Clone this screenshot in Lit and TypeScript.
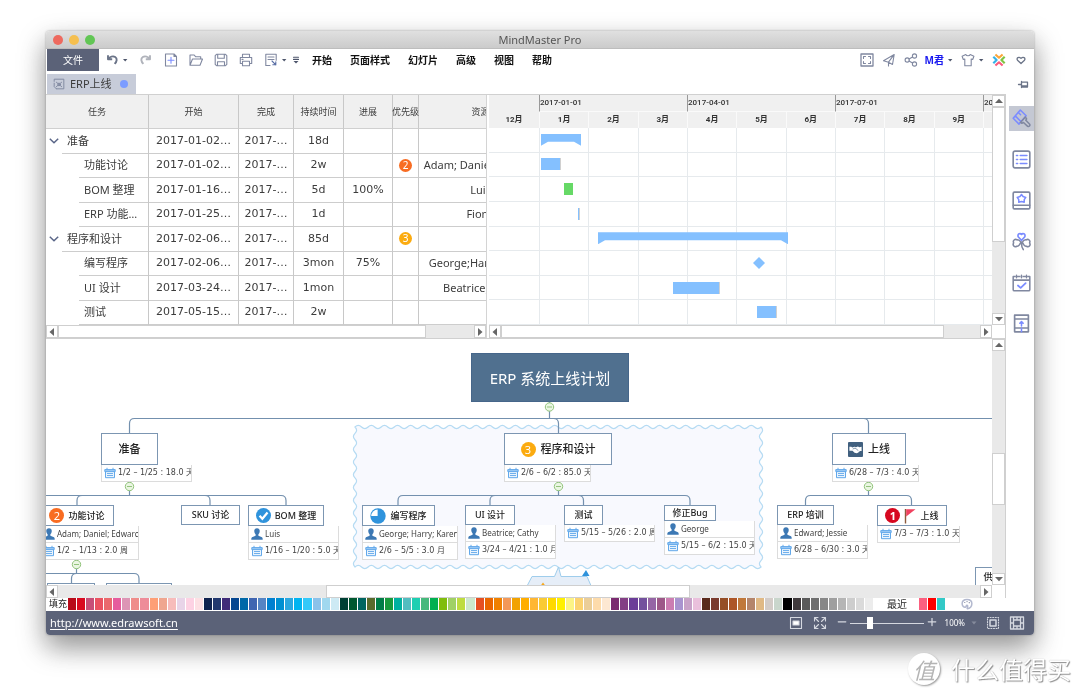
import { LitElement, html, css, svg, nothing } from "lit";
import { customElement } from "lit/decorators.js";
import { classMap } from "lit/directives/class-map.js";
import { styleMap } from "lit/directives/style-map.js";

interface Task {
  name: string;
  level: number;
  start: string;
  end: string;
  span: string;
  progress: string;
  priority: number;
  people: string;
  bar: { kind: "summary" | "work" | "done" | "milestone"; from: number; width: number };
}

const TASKS: Task[] = [
  { name: "准备", level: 0, start: "2017-01-02…", end: "2017-…", span: "18d", progress: "", priority: 0, people: "", bar: { kind: "summary", from: 52, width: 40 } },
  { name: "功能讨论", level: 1, start: "2017-01-02…", end: "2017-…", span: "2w", progress: "", priority: 2, people: "Adam; Daniel; Edward", bar: { kind: "work", from: 52, width: 20 } },
  { name: "BOM 整理", level: 1, start: "2017-01-16…", end: "2017-…", span: "5d", progress: "100%", priority: 0, people: "Luis", bar: { kind: "done", from: 75, width: 9 } },
  { name: "ERP 功能…", level: 1, start: "2017-01-25…", end: "2017-…", span: "1d", progress: "", priority: 0, people: "Fiona", bar: { kind: "work", from: 89, width: 2 } },
  { name: "程序和设计", level: 0, start: "2017-02-06…", end: "2017-…", span: "85d", progress: "", priority: 3, people: "", bar: { kind: "summary", from: 109, width: 190 } },
  { name: "编写程序", level: 1, start: "2017-02-06…", end: "2017-…", span: "3mon", progress: "75%", priority: 0, people: "George;Harry;Karen", bar: { kind: "milestone", from: 264, width: 12 } },
  { name: "UI 设计", level: 1, start: "2017-03-24…", end: "2017-…", span: "1mon", progress: "", priority: 0, people: "Beatrice;Cathy", bar: { kind: "work", from: 184, width: 47 } },
  { name: "测试", level: 1, start: "2017-05-15…", end: "2017-…", span: "2w", progress: "", priority: 0, people: "", bar: { kind: "work", from: 268, width: 20 } },
];

const QUARTERS = [
  { date: "2017-01-01", months: ["1月", "2月", "3月"] },
  { date: "2017-04-01", months: ["4月", "5月", "6月"] },
  { date: "2017-07-01", months: ["7月", "8月", "9月"] },
  { date: "2017-10-01", months: ["10月", "11月", "12月"] },
];

const FILLS =
  "b80a19 d90a20 c74f78 ea5261 ea696d e65c9d dd95b5 ef8c8a ee8c99 fe9f76 efa68f f7bcbb e8d4e8 fdd2e3 fde0e4 10234f 22386e 402c79 054690 0068a8 4065b1 5684c4 0080d0 0090d2 2ba8e0 00b4f1 33c9f9 8bc2ea a0d8ef cdeaf4 004034 00582f 006560 5a6b2c 007d47 189a3c 00b1a0 52bdc0 1dcfb2 45b97c 00b050 80bd0c a0d165 bedc40 cde8cd e64f22 ea6500 f08000 f39858 f2a200 ffad00 ffb733 facb34 ffd800 fff000 fcf385 fcd370 ebce98 fddbab fde8d2 7a2a70 833f85 6b3d98 73519d 9565a5 9d5888 cc7db2 a993cf c8a2c8 eac0dc 5a2a1c 7a3b2e 954e26 ad5627 c0783a b4856b e0b985 d3ccc8 c9d6cc 000000 403a3c 5a5a5a 6e6e6e 878787 9f9f9f b5b5b5 cdcdcd dadada ececec".split(" ");
const RECENT = ["fb6080", "ff0000", "33c9c7"];

interface MapNode {
  x: number;
  y: number;
  w: number;
  h: number;
  text: string;
  kind?: "root" | "branch";
  icons?: string[];
  who?: string;
  when?: string;
  noteWidth?: number;
}

/* Canvas coordinates of the top-left corner of the visible map area. */
const VIEW = { x: 46, y: 339, w: 947, h: 247 };

const NODES: MapNode[] = [
  { x: 471, y: 353, w: 158, h: 49, text: "ERP 系统上线计划", kind: "root" },
  { x: 101, y: 433, w: 57, h: 32, text: "准备", kind: "branch", when: "1/2 – 1/25 : 18.0 天", noteWidth: 91 },
  { x: 504, y: 433, w: 108, h: 32, text: "程序和设计", kind: "branch", icons: ["p3"], when: "2/6 – 6/2 : 85.0 天", noteWidth: 87 },
  { x: 832, y: 433, w: 74, h: 32, text: "上线", kind: "branch", icons: ["deal"], when: "6/28 – 7/3 : 4.0 天", noteWidth: 87 },
  { x: 40, y: 505, w: 74, h: 21, text: "功能讨论", icons: ["p2"], who: "Adam; Daniel; Edward", when: "1/2 – 1/13 : 2.0 周", noteWidth: 99 },
  { x: 181, y: 505, w: 59, h: 20, text: "SKU 讨论" },
  { x: 248, y: 505, w: 76, h: 21, text: "BOM 整理", icons: ["check"], who: "Luis", when: "1/16 – 1/20 : 5.0 天", noteWidth: 91 },
  { x: 362, y: 505, w: 73, h: 21, text: "编写程序", icons: ["pie"], who: "George; Harry; Karen", when: "2/6 – 5/5 : 3.0 月", noteWidth: 96 },
  { x: 465, y: 505, w: 50, h: 20, text: "UI 设计", who: "Beatrice; Cathy", when: "3/24 – 4/21 : 1.0 月", noteWidth: 91 },
  { x: 564, y: 505, w: 39, h: 20, text: "测试", when: "5/15 – 5/26 : 2.0 周", noteWidth: 91 },
  { x: 664, y: 505, w: 52, h: 16, text: "修正Bug", who: "George", when: "5/15 – 6/2 : 15.0 天", noteWidth: 91 },
  { x: 777, y: 505, w: 57, h: 20, text: "ERP 培训", who: "Edward; Jessie", when: "6/28 – 6/30 : 3.0 天", noteWidth: 91 },
  { x: 877, y: 505, w: 70, h: 21, text: "上线", icons: ["p1", "flag"], when: "7/3 – 7/3 : 1.0 天", noteWidth: 83 },
  { x: 47, y: 583, w: 48, h: 20, text: "" },
  { x: 106, y: 583, w: 66, h: 20, text: "" },
  { x: 975, y: 567, w: 44, h: 20, text: "供应商" },
];

const COLLAPSERS = [
  [549.5, 407],
  [129.5, 486.5],
  [558.5, 486.5],
  [868.5, 486.5],
  [76.5, 564.5],
];

const wave = (x0: number, y0: number, x1: number, y1: number) => {
  const side = (dx: number, dy: number, length: number) => {
    const n = Math.round(length / 13.3);
    const s = length / n;
    let d = "";
    for (let i = 0; i < n; i++) {
      d += `q${(dx * s) / 4 + dy * 3.2} ${(dy * s) / 4 - dx * 3.2} ${(dx * s) / 2} ${(dy * s) / 2}`;
      d += `q${(dx * s) / 4 - dy * 3.2} ${(dy * s) / 4 + dx * 3.2} ${(dx * s) / 2} ${(dy * s) / 2}`;
    }
    return d;
  };
  return `M${x0} ${y0}${side(1, 0, x1 - x0)}${side(0, 1, y1 - y0)}${side(-1, 0, x1 - x0)}${side(0, -1, y1 - y0)}Z`;
};

const G = "#8088a0";
const B = "#7b8cff";
const icon = (body: unknown, size = 16, stroke = G) => html`<svg
  class="ico" width=${size} height=${size} viewBox="0 0 16 16" fill="none" stroke=${stroke}
  stroke-width="1.1" stroke-linecap="round" stroke-linejoin="round" aria-hidden="true">${body}</svg>`;

const caret = html`<svg class="ico" width="8" height="6" viewBox="0 0 8 6" aria-hidden="true"><path d="M2 2h4.4L4.2 4.6z" fill="#4d556b" /></svg>`;

const ICONS = {
  undo: svg`<path d="M4 3.2v4h4.2M4.3 7C6 4.6 9 3.6 11.2 5c2.3 1.5 1.8 4.8-.6 6.9" stroke="#6b7488" stroke-width="1.9" stroke-linecap="butt"/>`,
  redo: svg`<path d="M12 3.2v4H7.8M11.7 7C10 4.6 7 3.6 4.8 5 2.5 6.5 3 9.8 5.4 11.9" stroke="#b0b3bb" stroke-width="1.9" stroke-linecap="butt"/>`,
  add: svg`<path d="M2.500 2h8.500l2.500 2.500V14h-11zM11 2v2.500h2.500"/><path d="M8 5.200v6M5 8.200h6" stroke="${B}"/>`,
  open: svg`<path d="M2 13.200V3h4.200l1.500 1.800h5v2.200M2 13.200 4.500 7h10l-2.500 6.200z"/>`,
  save: svg`<path d="M3.500 2.300h9l1.300 1.300v8.800l-1.300 1.300h-9l-1.300-1.300V3.600zM4.700 2.300v3.900h6.600V2.300M4.500 13.700V9.700h7v4"/>`,
  print: svg`<path d="M4.500 5.500V2.300h7v3.200M4.500 11.500H2.300v-6h11.400v6h-2.200M4.500 9.200h7v4.500h-7zM4 7.400h1"/>`,
  send: svg`<path d="M7 13.500H2.800V2.300h10.400v6"/><path d="M5 5h6M5 7.500h6"/><path d="m9 9 3.800 3.800M12.800 9.800v3h-3" stroke="#5a6fa5"/>`,
  more: svg`<path d="M5.500 5.200h5M5.500 7.400h5" stroke="#4d556b"/><path d="M5.500 9h5L8 11.500z" fill="#4d556b" stroke="none"/>`,
  fit: svg`<path d="M2 2h12v12H2z" stroke-width="1.300"/><path d="M4.500 6.500v-2h2M9.500 4.500h2v2M11.500 9.500v2h-2M6.500 11.500h-2v-2"/>`,
  plane: svg`<path d="M2.500 8.800 13.200 2.500l-1.700 10-4-2.300zM7.500 10.200l5.200-7M7.500 10.300V14"/>`,
  share: svg`<circle cx="4.200" cy="8" r="2.100"/><circle cx="11.500" cy="4" r="2.100"/><circle cx="11.500" cy="12" r="2.100"/><path d="m6 7 3.600-2M6 9l3.600 2"/>`,
  shirt: svg`<path d="M5.800 2.500c.6 1.700 3.800 1.700 4.400 0l3.700 1.800-1.200 3.200-1.500-.5v6.700H4.800V7l-1.500.5-1.200-3.200z"/>`,
  heart: svg`<path d="M8 11.500 4.500 8.300C3.200 6 5.800 4.200 8 6.400 10.200 4.200 12.800 6 11.500 8.300z" stroke="#6b7488" stroke-width="1.300"/>`,
  pin: svg`<path d="M3.500 8.500H6M6.500 5.500v6M6.500 6.200h6V11h-6M6.500 10h6" stroke="#6b7488" stroke-width="1.300"/>`,
};

const SIDE = [
  { label: "样式", body: svg`<path d="M7 .9 1 7.800l4.900 4.900 6-7zM3 6l4.600 4.800M5.200 2.800l2 2" stroke="${B}" stroke-width="1.300"/><path d="m11.300 6.800 1 1.500-.7 1.200 3.300 3.400c.6 1.100-.5 2.200-1.700 1.700L9.700 11.400l-1.400.6-1.200-.7z" stroke-width="1.300"/>` },
  { label: "大纲", body: svg`<rect x="1" y="1" width="14" height="14" rx="1.500" stroke-width="1.400"/><path d="M7 4.600h5.500M7 8h5.500M7 11.400h5.500M3.800 4.600h.9M3.800 8h.9M3.800 11.400h.9" stroke="${B}" stroke-width="1.400"/>` },
  { label: "图标", body: svg`<rect x="1" y="1" width="14" height="14" rx="1" stroke-width="1.400"/><path d="M1 12h14" stroke-width="1.200"/><path d="m8 2.900 1.300 1.700 2.300.8-1.300 1.900v2.200L8 8.800l-2.300.7V7.300L4.400 5.400l2.300-.8z" stroke="${B}" stroke-width="1.300"/>` },
  { label: "剪贴画", body: svg`<path d="M8 7 5.200 4C4.400 1.600 7 .5 8 2.100 9 .5 11.600 1.600 10.800 4z" stroke="${B}" stroke-width="1.400"/><path d="M7.500 8.500C6 6.500 4.800 6.500 4.300 6.700 2.500 5.400.4 7.300 1.400 9.200.2 11 2 13.200 4 12c1.800.5 2.500-1.400 3.500-3.500zM8.700 8.500c1.500-2 2.700-2 3.200-1.800 1.800-1.300 3.900.6 2.900 2.500 1.200 1.800-.6 4-2.600 2.800-1.800.5-2.500-1.400-3.500-3.500zM8.100 8.500c-.3 3 .3 4.800 1.400 6.300" stroke-width="1.300"/>` },
  { label: "任务", body: svg`<path d="M1 3.500V14c0 .6.400 1 1 1h12c.6 0 1-.4 1-1V3.500M1 6h14M1 3h1.500M5 3h1.500M9.500 3H11M13.500 3H15M3.800 2v2M8 2v2M12.200 2v2" stroke-width="1.300"/><path d="m5 10.500 2.300 2L11.500 8.500" stroke="${B}" stroke-width="1.500"/>` },
  { label: "幻灯片", body: svg`<path d="M2.200 1h11.600v14H2.200zM2.200 4.200h11.600M2.200 11.800h11.600" stroke-width="1.400"/><path d="M8 10V6.600M6.600 7.800 8 6.400l1.400 1.400M8 12v3" stroke="${B}" stroke-width="1.300"/>` },
];

const badge = (n: number) => html`<span class=${classMap({ badge: true, one: n === 1, two: n === 2, three: n === 3 })}>${n}</span>`;

const nodeIcon = (name: string) => {
  switch (name) {
    case "p1": return badge(1);
    case "p2": return badge(2);
    case "p3": return badge(3);
    case "check":
      return html`<svg width="15" height="15" viewBox="0 0 16 16" aria-hidden="true"><circle cx="8" cy="8" r="8" fill="#2f93dc" /><path d="m3.800 8.200 3 3.200 5.500-6.500" fill="none" stroke="#fff" stroke-width="2.400" /></svg>`;
    case "pie":
      return html`<svg width="16" height="16" viewBox="0 0 16 16" aria-hidden="true"><circle cx="8" cy="8" r="7.700" fill="#2f93dc" /><path d="M7.600 8H1.200A6.800 6.800 0 0 1 7.600 1.400z" fill="#fff" /></svg>`;
    case "deal":
      return html`<svg width="15" height="15" viewBox="0 0 16 16" aria-hidden="true"><rect width="16" height="16" rx="1" fill="#41607f" /><path d="M1.500 5h2l1 .8L7 5l1.500.6 2-.8 1.800.8 2.200-.6v4.600h-1.700l-1.800 1.500-1.500.9-2.500-.6-2.200-2H1.500z" fill="#fff" /><path d="m5 7.500 2.500-1 1.500 1 2 1.700" fill="none" stroke="#41607f" stroke-width=".7" /></svg>`;
    default:
      return html`<svg width="12" height="16" viewBox="0 0 12 16" aria-hidden="true"><path d="M1.500 1v14.500" stroke="#8b5a3c" stroke-width="1.400" /><path d="M2.200 1.200h9.300L2.200 8.500z" fill="#f0415f" /></svg>`;
  }
};

const person = html`<svg width="12" height="12" viewBox="0 0 12 12" aria-hidden="true"><path d="M6 .3c2 0 3 1.400 2.700 3.300C8.500 5 8 5.700 7.400 6.300v1.400l3.600 1.600c.6.400.7 1.200.7 2.400H.3c0-1.200.1-2 .7-2.400l3.600-1.600V6.300C4 5.700 3.500 5 3.300 3.600 3 1.700 4 .3 6 .3z" fill="#3c78b4" /></svg>`;
const calendar = html`<svg width="12" height="12" viewBox="0 0 12 12" fill="none" stroke="#62a8ea" aria-hidden="true"><path d="M1.500 4.500v6.200h9V4.500" fill="#eaf4fd" /><path d="M.8 2.600h10.400v2H.8zM3 .8v2M9 .8v2" fill="#9cc9f4" /><path d="M3 6.500h6M3 8.500h6" stroke-width=".9" /></svg>`;

@customElement("app-root")
export class AppRoot extends LitElement {
  static styles = css`
    :host { display: flex; flex-direction: column; height: 100vh; overflow: hidden; background: #fff; color: #3c3c3c; font: 11px/16px "Noto Sans", "Noto Sans CJK SC", sans-serif; }
    * { box-sizing: border-box; }
    button { border: 0; padding: 0; margin: 0; background: none; font: inherit; color: inherit; display: flex; align-items: center; justify-content: center; }
    .ico { display: block; flex: none; }
    .window { flex: 1; min-height: 0; margin: 31px 46px 0; display: flex; flex-direction: column; background: #fff; border-radius: 4px; overflow: hidden; }
    .stage { flex: 1; min-height: 0; display: flex; flex-direction: column; filter: drop-shadow(0 12px 14px rgba(0, 0, 0, 0.36)) drop-shadow(0 0 1px rgba(0, 0, 0, 0.3)); }
    .title { flex: none; height: 18px; display: grid; grid-template-columns: 1fr auto 1fr; align-items: center; background: linear-gradient(#e0e0e0, #cbcbcb); color: #555; border-bottom: 1px solid #bdbdbd; }
    .lights { display: flex; gap: 6px; padding-left: 7px; }
    .light { width: 10px; height: 10px; border-radius: 50%; background: #ee6a5f; }
    .light.min { background: #f5bf4f; }
    .light.max { background: #62c655; }
    .tools { flex: none; height: 22px; display: flex; align-items: center; padding: 0 5px 0 1px; }
    .file { align-self: stretch; width: 52px; background: #5b6278; color: #fff; font-size: 10px; margin-right: 5px; }
    .quick { display: flex; align-items: center; gap: 9px; }
    .pair { display: flex; align-items: center; gap: 1px; }
    .menu { display: flex; gap: 18px; margin-left: 8px; color: #111; font-size: 10px; font-weight: 700; flex: 1; white-space: nowrap; }
    .account { display: flex; align-items: center; gap: 6px; }
    .user { color: #1a1af0; font-size: 10px; font-weight: 700; gap: 2px; }
    .tabs { flex: none; height: 23px; padding: 3px 3px 0 1px; display: flex; justify-content: space-between; align-items: stretch; }
    .tab { width: 89px; height: 20px; display: flex; align-items: center; gap: 4px; padding-left: 5px; background: #c7ccd9; white-space: nowrap; }
    .dot { width: 8px; height: 8px; border-radius: 50%; background: #7b9cff; margin-left: 4px; }
    .body { flex: 1; min-height: 0; display: flex; }
    .work { flex: 1; min-width: 0; display: flex; flex-direction: column; border-right: 1px solid #d0d0d0; }
    .side { flex: none; width: 28px; padding: 12px 0 0 3px; display: flex; flex-direction: column; gap: 16px; }
    .side button { height: 25px; }
    .side .on { background: #c4c8d3; }
    .plan { flex: none; height: 245px; display: flex; border-top: 1px solid #d0d0d0; border-bottom: 1px solid #d0d0d0; }
    .sheet { flex: none; width: 441px; display: flex; flex-direction: column; border-right: 1px solid #d4d4d4; overflow: hidden; }
    .view { flex: 1; min-height: 0; overflow: hidden; display: flex; }
    table { display: flex; flex-direction: column; flex: none; width: 497px; }
    thead { flex: none; }
    tbody { flex: 1; display: flex; flex-direction: column; }
    tr { display: grid; grid-template-columns: 103px 90px 55px 50px 49px 26px 124px; }
    tbody tr { flex: 1; }
    th { height: 34px; background: #f0f0f0; font-weight: 400; font-size: 9px; display: flex; align-items: center; justify-content: center; border-right: 1px solid #c8c8c8; border-bottom: 1px solid #d0d0d0; white-space: nowrap; }
    td { padding: 0; display: flex; align-items: center; justify-content: center; border-right: 1px solid #c8c8c8; border-bottom: 1px solid #cdcdcd; white-space: nowrap; overflow: hidden; }
    td.num { font-family: "DejaVu Sans", "Noto Sans CJK SC", sans-serif; }
    td.name { border-bottom: 0; align-items: stretch; justify-content: flex-start; }
    .label { flex: 1; display: flex; align-items: center; padding-left: 5px; border-bottom: 1px solid #cdcdcd; }
    .fold { flex: none; width: 16px; }
    .indent { flex: none; width: 33px; }
    .badge { flex: none; width: 15px; height: 15px; border-radius: 50%; display: flex; align-items: center; justify-content: center; color: #fff; font: 11px/15px "Noto Sans", sans-serif; }
    .badge.one { background: #d70820; font-weight: 700; }
    .badge.two { background: #f86c22; }
    .badge.three { background: #fbab10; }
    td .badge { width: 13px; height: 13px; font-size: 10px; }
    .gantt { flex: 1; min-width: 0; margin-left: 2px; display: flex; flex-direction: column; }
    .chart { flex: 1; min-width: 0; overflow: hidden; display: flex; flex-direction: column; }
    .scale { flex: none; height: 33px; display: flex; background: #f0f0f0; color: #333; font: 500 8px/16px Roboto, "Noto Sans CJK SC", sans-serif; }
    .lead { flex: none; width: 50px; padding-top: 17px; text-align: center; font-weight: 700; }
    .quarter { flex: none; width: 148px; }
    .date { height: 17px; border-left: 1px solid #999; border-bottom: 1px solid #fafafa; }
    .months { display: grid; grid-template-columns: repeat(3, 1fr); text-align: center; font-weight: 700; }
    .months span { border-left: 1px solid #fafafa; }
    .rows { flex: 1; position: relative; display: flex; flex-direction: column; overflow: hidden; }
    .lane { flex: 1; position: relative; display: flex; align-items: center; border-bottom: 1px solid #e6eaed; }
    .mark { height: 12px; flex: none; background: #84c0ff; }
    .mark.summary { clip-path: polygon(0 0, 100% 0, 100% 100%, calc(100% - 7px) 8px, 7px 8px, 0 100%); }
    .mark.done { background: #66d966; }
    .mark.milestone { clip-path: polygon(50% 0, 100% 50%, 50% 100%, 0 50%); }
    .columns { position: absolute; inset: 0; display: flex; }
    .gap { flex: none; width: 50px; }
    .column { flex: none; width: 148px; display: grid; grid-template-columns: repeat(3, 1fr); }
    .column i { border-left: 1px solid #e6eaed; }
    .scroll { flex: none; display: flex; background: #e9e9e9; }
    .scroll.h { height: 13px; }
    .scroll.v { width: 13px; flex-direction: column; }
    .scroll button { flex: none; width: 12px; height: 12px; background: #fff; border: 1px solid #cfcfcf; }
    .scroll.v button { width: 13px; }
    .scroll.h button { height: 13px; }
    .thumb { background: #fff; border: 1px solid #cfcfcf; }
    .foot { flex: none; display: grid; grid-template-columns: 1fr 13px; }
    .map { flex: 1; min-height: 0; display: flex; flex-direction: column; }
    .canvas { flex: 1; min-width: 0; position: relative; overflow: hidden; }
    .links { position: absolute; left: 0; top: 0; }
    .node { position: absolute; }
    .box { background: #fff; border: 1px solid #7c96b2; display: flex; align-items: center; justify-content: center; gap: 4px; color: #222; font-size: 9px; font-weight: 500; white-space: nowrap; }
    .branch .box { font-size: 11px; gap: 5px; }
    .root .box { background: #50708f; border-color: #46668a; color: #fff; font-size: 15px; font-weight: 400; }
    .note { height: 17px; display: flex; align-items: center; gap: 2px; padding-left: 2px; background: #fff; border: 1px solid #dcdcdc; border-top-width: 0; font-size: 8px; white-space: nowrap; overflow: hidden; color: #444; }
    .note svg { flex: none; }
    .note.when { font-family: "DejaVu Sans", "Noto Sans CJK SC", sans-serif; }
    .palette { flex: none; height: 13px; display: flex; align-items: center; padding: 0 0 1px 3px; font-size: 9px; color: #222; }
    .swatches { flex: 0 1 805px; align-self: stretch; margin-left: 1px; display: grid; grid-template-columns: repeat(89, 1fr); column-gap: 1px; }
    .swatches button, .recent button { height: 12px; }
    .recent { display: grid; grid-template-columns: repeat(3, 8px); column-gap: 1px; margin: 0 16px 0 12px; }
    .latest { font-size: 10px; margin-left: 14px; }
    .status { flex: none; height: 24px; display: flex; align-items: center; background: #5b6278; color: #fff; padding: 0 9px 0 4px; }
    .status a { color: #fff; text-underline-offset: 2px; margin-right: auto; }
    .zoomset { display: flex; align-items: center; gap: 8px; font-size: 8px; }
    .zoom { display: flex; align-items: center; gap: 3px; margin-left: 1px; }
    .percent { display: flex; align-items: center; gap: 6px; }
    input { appearance: none; width: 74px; height: 12px; margin: 0; background: linear-gradient(#d5d8e0, #d5d8e0) center / 100% 1px no-repeat; }
    input::-webkit-slider-thumb { appearance: none; width: 6px; height: 12px; background: #fff; }
    .mark-row { flex: none; height: 61px; display: flex; justify-content: flex-end; align-items: center; gap: 11px; padding: 6px 9px 0 0; position: relative; color: #fff; font: 24px/28px "Noto Sans CJK SC", sans-serif; text-shadow: 1px 1px 1px #8d8d8d, 0 0 1px #aaa; }
    .seal { width: 32px; height: 32px; border-radius: 50%; background: #fff; color: #b4b4b4; box-shadow: 1px 1px 2px #999; display: flex; align-items: center; justify-content: center; font-size: 22px; font-style: italic; text-shadow: none; }
  `;

  private arrow(d: string, label: string) {
    return html`<button aria-label=${label}><svg class="ico" width="8" height="8" viewBox="0 0 8 8" aria-hidden="true"><path d=${d} fill="#666" /></svg></button>`;
  }

  private scrollbar(axis: "h" | "v", before: number, size: number, after: number) {
    const h = axis === "h";
    return html`<div class="scroll ${axis}">
      ${this.arrow(h ? "M6 0v8L1.500 4z" : "M0 6h8L4 1.800z", h ? "向左" : "向上")}
      <span style=${styleMap({ flexGrow: `${before}` })}></span>
      <span class="thumb" style=${styleMap({ flexGrow: `${size}` })}></span>
      <span style=${styleMap({ flexGrow: `${after}` })}></span>
      ${this.arrow(h ? "M2 0v8l4.500-4z" : "M0 2h8L4 6.200z", h ? "向右" : "向下")}
    </div>`;
  }

  private sheet() {
    return html`<section class="sheet">
      <div class="view">
        <table>
          <thead><tr>${["任务", "开始", "完成", "持续时间", "进展", "优先级", "资源"].map((t) => html`<th scope="col">${t}</th>`)}</tr></thead>
          <tbody>
            ${TASKS.map((t) => html`<tr>
              <td class="name">
                ${t.level === 0
                  ? html`<button class="fold" aria-label="折叠"><svg class="ico" width="10" height="6" viewBox="0 0 10 6" fill="none" stroke="#5a6688" stroke-width="1.500" aria-hidden="true"><path d="m.8.8 4.200 4 4.200-4" /></svg></button>`
                  : html`<span class="indent"></span>`}
                <span class="label">${t.name}</span>
              </td>
              <td class="num">${t.start}</td><td class="num">${t.end}</td><td class="num">${t.span}</td><td class="num">${t.progress}</td>
              <td>${t.priority ? badge(t.priority) : nothing}</td><td>${t.people}</td>
            </tr>`)}
          </tbody>
        </table>
      </div>
      ${this.scrollbar("h", 0, 368, 48)}
    </section>`;
  }

  private gantt() {
    return html`<section class="gantt">
      <div class="view">
        <div class="chart">
          <div class="scale">
            <div class="lead">12月</div>
            ${QUARTERS.map((q) => html`<div class="quarter"><div class="date">${q.date}</div><div class="months">${q.months.map((m) => html`<span>${m}</span>`)}</div></div>`)}
          </div>
          <div class="rows">
            <div class="columns"><span class="gap"></span>${QUARTERS.map(() => html`<div class="column"><i></i><i></i><i></i></div>`)}</div>
            ${TASKS.map((t) => html`<div class="lane"><span class="mark ${t.bar.kind}" style=${styleMap({ marginLeft: `${t.bar.from}px`, width: `${t.bar.width}px` })}></span></div>`)}
          </div>
        </div>
        ${this.scrollbar("v", 0, 135, 72)}
      </div>
      <div class="foot">${this.scrollbar("h", 0, 444, 36)}</div>
    </section>`;
  }

  private node(n: MapNode) {
    const note = styleMap({ width: `${n.noteWidth ?? 0}px` });
    return html`<div class="node ${n.kind ?? "leaf"}" style=${styleMap({ left: `${n.x - VIEW.x}px`, top: `${n.y - VIEW.y}px` })}>
      <div class="box" style=${styleMap({ width: `${n.w}px`, height: `${n.h}px` })}>${(n.icons ?? []).map(nodeIcon)}<span>${n.text}</span></div>
      ${n.who ? html`<div class="note" style=${note}>${person}<span>${n.who}</span></div>` : nothing}
      ${n.when ? html`<div class="note when" style=${note}>${calendar}<span>${n.when}</span></div>` : nothing}
    </div>`;
  }

  private map() {
    return html`<section class="map">
      <div class="view">
        <div class="canvas">
          <svg class="links" width=${VIEW.w} height=${VIEW.h} viewBox="${VIEW.x} ${VIEW.y} ${VIEW.w} ${VIEW.h}" fill="none" stroke="#7390ae" stroke-width="1.200" aria-hidden="true">
            <path d=${wave(355, 427, 761, 567)} fill="#f8f9fe" stroke="#b5dbf3" />
            <path d="M526 588 532 576.500H554.500L558.500 567 561 576.500H587L592 588z" fill="#e6eef8" stroke="#9fcdec" stroke-width="1" />
            <path d="M539 588 543 582.500 547 588z" fill="#f8a81c" stroke="none" />
            <path d="M582 576 586 570 589.500 576z" fill="#2f93dc" stroke="none" />
            <path d="M549.500 401V418.500M129.500 433V423.500q0-5 5-5H993M553.500 418.500q5 0 5 5V433M863.500 418.500q5 0 5 5V433" />
            <path d="M129.500 481V495.500M46 495.500H281q5 0 5 5V505M82 495.500q-5 0-5 5V505M205 495.500q5 0 5 5V505" />
            <path d="M558.500 481V495.500M398 505V500.500q0-5 5-5H685q5 0 5 5V505M495 495.500q-5 0-5 5V505M578.500 495.500q5 0 5 5V505" />
            <path d="M868.500 481V495.500M805.500 505V500.500q0-5 5-5H906.500q5 0 5 5V505" />
            <path d="M76.500 560V573.500M46 573.500H134q5 0 5 5V584M76.500 573.500q-5 0-5 5V584" />
            ${COLLAPSERS.map(([x, y]) => svg`<circle cx=${x} cy=${y} r="4.200" fill="#eaf6e2" stroke="#93c47d" stroke-width="1"/><path d="M${x - 2.5} ${y}h5" stroke="#93c47d" stroke-width="1"/>`)}
          </svg>
          ${NODES.map((n) => this.node(n))}
        </div>
        ${this.scrollbar("v", 103, 50, 69)}
      </div>
      <div class="foot">${this.scrollbar("h", 269, 363, 291)}</div>
    </section>`;
  }

  render() {
    const tool = (label: string, body: unknown) => html`<button aria-label=${label}>${icon(body)}</button>`;
    return html`
      <div class="stage">
        <main class="window">
          <header class="title"><div class="lights"><span class="light"></span><span class="light min"></span><span class="light max"></span></div><span>MindMaster Pro</span><span></span></header>
          <div class="tools">
            <button class="file">文件</button>
            <div class="quick">
              <div class="pair">${tool("撤销", ICONS.undo)}<button aria-label="撤销列表">${caret}</button></div>
              ${tool("重做", ICONS.redo)}${tool("新建", ICONS.add)}${tool("打开", ICONS.open)}${tool("保存", ICONS.save)}${tool("打印", ICONS.print)}
              <div class="pair">${tool("导出", ICONS.send)}<button aria-label="导出列表">${caret}</button></div>
            </div>
            ${tool("更多", ICONS.more)}
            <nav class="menu">${["开始", "页面样式", "幻灯片", "高级", "视图", "帮助"].map((m) => html`<button>${m}</button>`)}</nav>
            <div class="account">
              ${tool("全屏", ICONS.fit)}${tool("发送", ICONS.plane)}${tool("分享", ICONS.share)}
              <button class="user">M君${caret}</button>
              <div class="pair">${tool("主题", ICONS.shirt)}<button aria-label="主题列表">${caret}</button></div>
              <button aria-label="MindMaster">
                <svg class="ico" width="16" height="16" viewBox="0 0 16 16" fill="none" stroke-width="2.200" stroke-linejoin="round" aria-hidden="true">
                  <path d="m4.400 2.500 3.600 3.200 3.600-3.200" stroke="#fba63b" /><path d="m4.400 13.500 3.600-3.200 3.600 3.200" stroke="#fb5c7c" /><path d="M2.300 4.800 5.600 8l-3.300 3.200" stroke="#35b3e8" /><path d="M13.700 4.800 10.400 8l3.300 3.200" stroke="#7fc443" />
                </svg>
              </button>
              ${tool("收藏", ICONS.heart)}
            </div>
          </div>
          <div class="tabs">
            <div class="tab">${icon(svg`<path d="M2.500 5V2.500h11v11H5M2.500 7v4l2.500 2.500M5 6l6 5M11 6l-6 5"/><circle cx="8" cy="8.500" r="1.500"/>`, 14)}<span>ERP上线</span><span class="dot"></span></div>
            ${tool("固定", ICONS.pin)}
          </div>
          <div class="body">
            <div class="work">
              <div class="plan">${this.sheet()}${this.gantt()}</div>
              ${this.map()}
            </div>
            <aside class="side">${SIDE.map((s, i) => html`<button class=${classMap({ on: i === 0 })} aria-label=${s.label}>${icon(s.body, 19)}</button>`)}</aside>
          </div>
          <div class="palette">
            <span>填充</span>
            <div class="swatches">${FILLS.map((c) => html`<button aria-label="#${c}" style=${styleMap({ background: `#${c}` })}></button>`)}</div>
            <span class="latest">最近</span>
            <div class="recent">${RECENT.map((c) => html`<button aria-label="#${c}" style=${styleMap({ background: `#${c}` })}></button>`)}</div>
            <button aria-label="更多颜色">${icon(svg`<path d="M8 2C4 2 1.500 4.500 1.500 7.700c0 2.800 2.300 4.900 4.300 4.500 1.400-.3.700-2 2-2.500 1.600-.5 1.200 2.500.4 4.500 3.800.2 6.300-3 6.300-6.500C14.500 4.500 12 2 8 2z" stroke-width="2" stroke="#b3b9cf"/><path d="M5 6h.1M8 4.800h.1M11 6.200h.1" stroke-width="1.600"/>`, 12)}</button>
          </div>
          <footer class="status">
            <a href="http://www.edrawsoft.cn">http://www.edrawsoft.cn</a>
            <div class="zoomset">
              <button aria-label="适合窗口">${icon(svg`<path d="M2.500 2.500h11v11h-11z"/><path d="M5 6h6v4H5z" fill="#fff"/>`, 16, "#d5d8e0")}</button>
              <button aria-label="全屏">${icon(svg`<path d="M2.500 6V2.500H6M10 2.500h3.500V6M13.500 10v3.500H10M6 13.500H2.500V10M3 3l3.500 3.500M13 3 9.500 6.500M13 13 9.500 9.500M3 13l3.500-3.500"/>`, 16, "#d5d8e0")}</button>
              <div class="zoom">
                <button aria-label="缩小">${icon(svg`<path d="M2 6h12" stroke-width="2"/>`, 10, "#d5d8e0")}</button>
                <input type="range" min="0" max="100" value="26" aria-label="缩放" />
                <button aria-label="放大">${icon(svg`<path d="M2 6h12M8 0v12" stroke-width="2"/>`, 10, "#d5d8e0")}</button>
              </div>
              <button class="percent">100%<svg class="ico" width="6" height="4" viewBox="0 0 6 4" aria-hidden="true"><path d="M.5.5h5L3 3.500z" fill="#858b9c" /></svg></button>
              <button aria-label="页面">${icon(svg`<path d="M2.500 2.500h11v11h-11z" stroke-dasharray="1 1.600"/><path d="M5 5h6v6H5z" stroke-width="1.500"/>`, 16, "#d5d8e0")}</button>
              <button aria-label="适合页面">${icon(svg`<path d="M1.500 2h13v12h-13zM4.500 2v12M11.500 2v12M1.500 8h3M11.500 8h3M4.500 5h7v6h-7zM8 2v3M8 11v3" stroke-width="1.300"/>`, 16, "#d5d8e0")}</button>
            </div>
          </footer>
        </main>
      </div>
      <div class="mark-row"><span class="seal">值</span><span>什么值得买</span></div>
    `;
  }
}
